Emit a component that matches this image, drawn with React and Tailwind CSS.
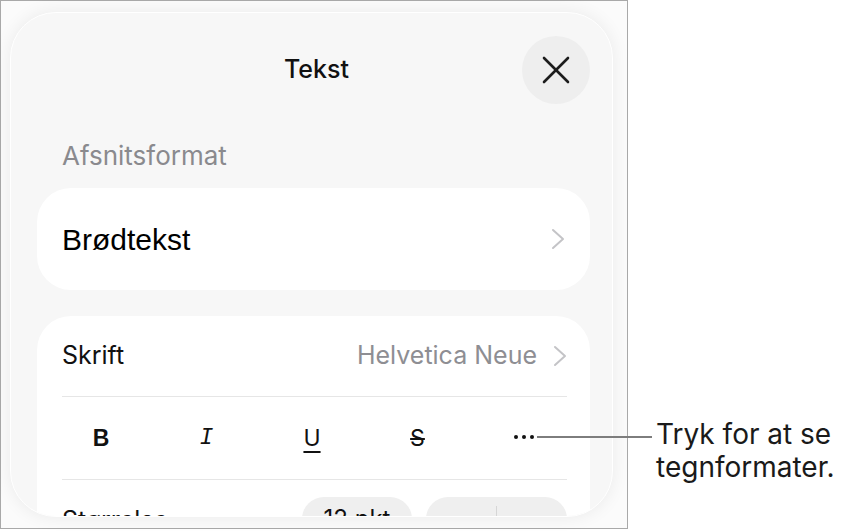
const sans = { fontFamily: 'Inter, "Noto Sans", sans-serif' }

const Chevron = () => (
  <svg width="14" height="22" viewBox="0 0 14 22" fill="none" stroke="#c4c4c7" strokeWidth="2" strokeLinecap="round" strokeLinejoin="round">
    <polyline points="2,2 12,11 2,20" />
  </svg>
)

const CloseIcon = () => (
  <svg width="28" height="28" viewBox="0 0 28 28" fill="none" stroke="#1c1c1c" strokeWidth="2.6" strokeLinecap="round">
    <line x1="2" y1="2" x2="26" y2="26" />
    <line x1="26" y1="2" x2="2" y2="26" />
  </svg>
)

const Divider = () => <div className="h-px bg-[#e6e6e6]" />

const FormatRow = () => (
  <div className="flex h-[82px] items-center justify-between pl-[29px] pr-[32px] text-[23px] text-[#111]">
    <div className="flex w-[20px] justify-center font-bold" style={{ fontFamily: '"Liberation Sans", sans-serif' }}>B</div>
    <div className="flex w-[20px] justify-center italic" style={{ fontFamily: '"Liberation Mono", monospace' }}>I</div>
    <div className="flex w-[20px] justify-center underline underline-offset-[5px] decoration-[1.5px]">U</div>
    <div className="flex w-[20px] justify-center line-through decoration-[1.5px]">S</div>
    <div className="flex w-[22px] items-center justify-center gap-[4px] pb-[2px]">
      <span className="h-[4px] w-[4px] shrink-0 rounded-full bg-[#111]" />
      <span className="h-[4px] w-[4px] shrink-0 rounded-full bg-[#111]" />
      <span className="h-[4px] w-[4px] shrink-0 rounded-full bg-[#111]" />
    </div>
  </div>
)

export default function App() {
  return (
    <div className="relative h-[532px] w-[857px] bg-white" style={sans}>
      <div className="flex h-[529px] w-[628px] flex-col border border-[#a9a9a9] bg-[#fbfbfb]">
        <div className="ml-[9px] mt-[11px] h-[505px] w-[603px] overflow-hidden rounded-[46px] border-[1.5px] border-white bg-[#f7f7f7] pl-[26px] pr-[22px] shadow-[0_0_18px_rgba(0,0,0,0.07)]">
          {/* header */}
          <div className="relative mt-[23px] flex h-[68px] items-center justify-center">
            <span className="pl-[6px] text-[25px] font-medium text-[#111]">Tekst</span>
            <button className="absolute right-0 top-0 flex h-[68px] w-[68px] items-center justify-center rounded-full bg-[#eeeeee]">
              <CloseIcon />
            </button>
          </div>

          <div className="mt-[37px] pl-[25px] text-[26px] leading-[30px] text-[#8a8a8e]">Afsnitsformat</div>

          <div className="mt-[17px] flex h-[102px] items-center justify-between rounded-[34px] bg-white pl-[25px] pr-[25px]">
            <span className="text-[30px] text-black" style={{ fontFamily: '"Liberation Sans", sans-serif' }}>Brødtekst</span>
            <Chevron />
          </div>

          <div className="mt-[26px] rounded-[34px] bg-white pl-[25px] pr-[23px]">
            <div className="flex h-[80px] items-center justify-between">
              <span className="text-[25px] text-[#111]">Skrift</span>
              <div className="flex items-center gap-[16px]">
                <span className="text-[25px] text-[#8e8e93]">Helvetica Neue</span>
                <Chevron />
              </div>
            </div>
            <Divider />
            <FormatRow />
            <Divider />
            <div className="flex h-[80px] items-start justify-between pt-[17px]">
              <span className="mt-[5px] text-[25px] text-[#111]">Størrelse</span>
              <div className="flex gap-[14px]">
                <div className="flex h-[44px] w-[110px] items-center justify-center rounded-full bg-[#efefef] text-[24px] text-[#111]">12 pkt</div>
                <div className="flex h-[44px] w-[141px] items-center rounded-full bg-[#efefef] text-[26px] text-[#111]">
                  <span className="flex-1 text-center">−</span>
                  <span className="h-[26px] w-px bg-[#d6d6d6]" />
                  <span className="flex-1 text-center">+</span>
                </div>
              </div>
            </div>
          </div>
        </div>
      </div>

      {/* callout */}
      <div className="absolute left-[537px] top-[418px] flex items-start">
        <div className="mt-[18px] h-[2px] w-[115px] bg-[#7d7d7d]" />
        <div className="pl-[4px] text-[28px] leading-[33px] text-[#1a1a1a]">
          <div>Tryk for at se</div>
          <div>tegnformater.</div>
        </div>
      </div>
    </div>
  )
}
